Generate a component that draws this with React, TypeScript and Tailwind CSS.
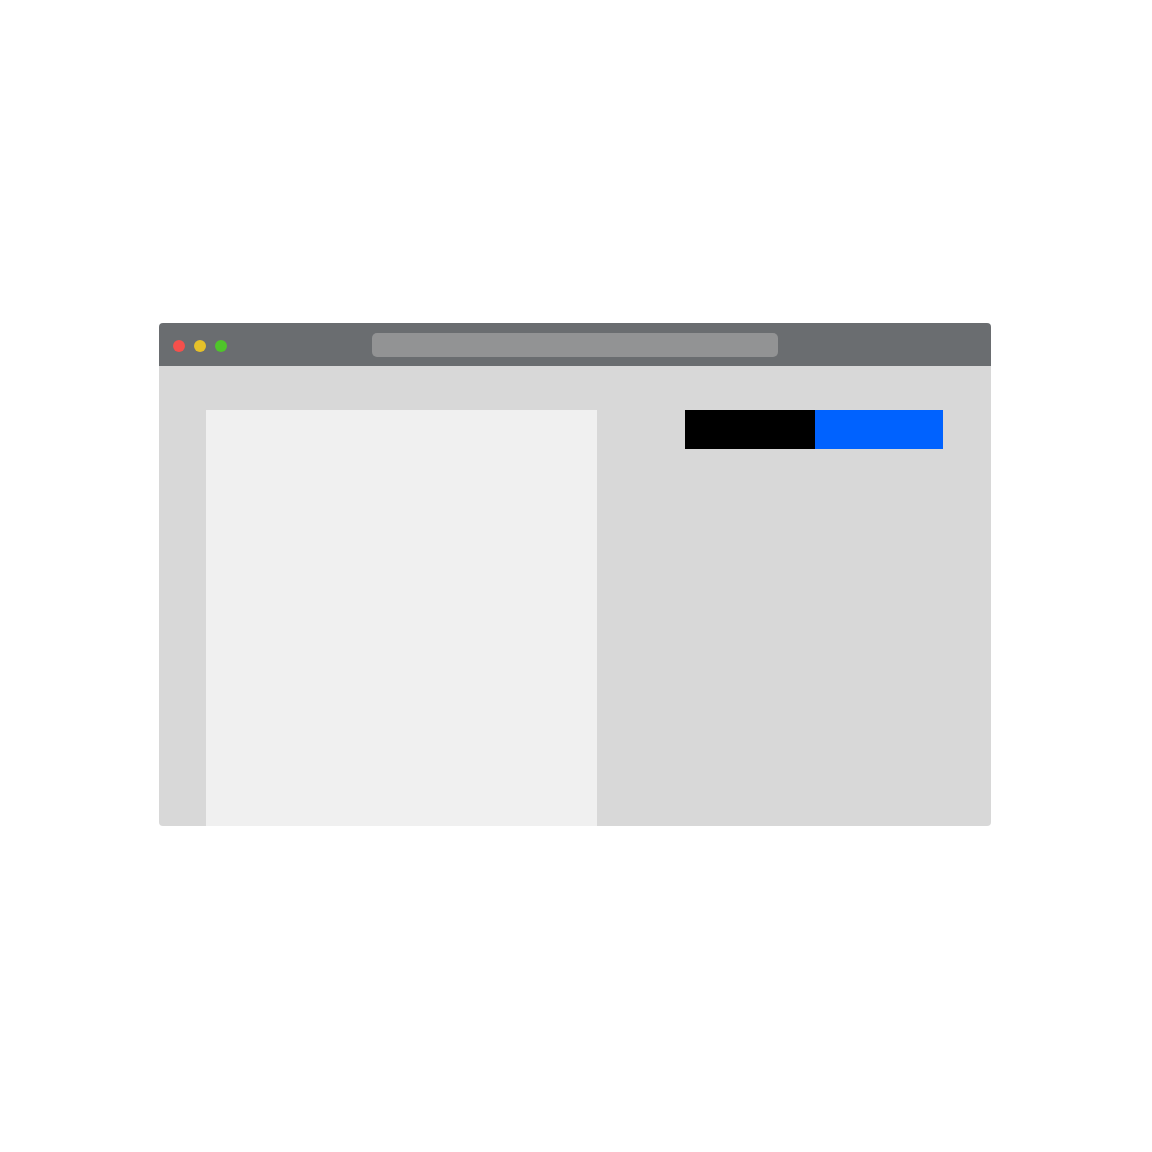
import React from 'react';

const dots = ['bg-[#f5504c]', 'bg-[#e6c12a]', 'bg-[#4fc52a]'];

export default function App() {
  return (
    <div className="min-h-screen bg-white pt-[323px] pl-[159px]">
      <div className="w-[832px] rounded-[4px] overflow-hidden">
        {/* title bar */}
        <div className="relative h-[43px] bg-[#6a6d70] flex items-center pl-[14px] pt-[2px] gap-[9px]">
          {dots.map((c) => (
            <span key={c} className={`w-3 h-3 rounded-full ${c}`} />
          ))}
          <div className="absolute left-[213px] top-[10px] w-[406px] h-6 rounded-[5px] bg-[#929394]" />
        </div>
        {/* page body */}
        <div className="h-[460px] bg-[#d8d8d8] flex pl-[47px] pt-[44px]">
          <div className="w-[391px] h-full bg-[#f0f0f0]" />
          <div className="ml-[88px] flex h-[39px]">
            <div className="w-[130px] bg-black" />
            <div className="w-[128px] bg-[#0062ff]" />
          </div>
        </div>
      </div>
    </div>
  );
}
